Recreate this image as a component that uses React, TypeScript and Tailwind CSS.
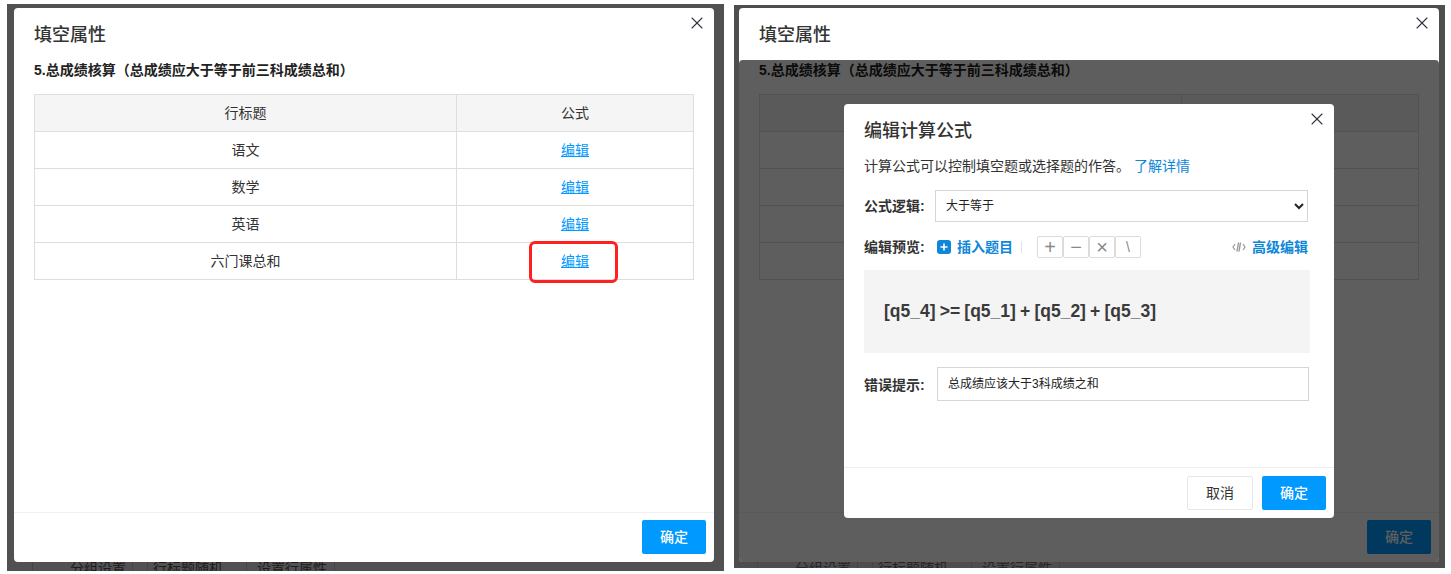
import { X } from "lucide-react";

const rows = ["语文", "数学", "英语", "六门课总和"];

function CloseButton() {
  return <X className="absolute top-[5px] right-[7px]" size={20} strokeWidth={1.3} color="#33333f" />;
}

function PrimaryButton() {
  return (
    <button className="w-16 h-[34px] rounded-[2px] bg-[#0099ff] text-white text-sm font-medium">确定</button>
  );
}

function BackStrip() {
  return (
    <div className="h-[9px] overflow-hidden flex pl-[18px] text-sm text-[#1c1c1c] leading-5">
      <div className="-mt-[4px] h-6 border-l border-[#444] pl-[37px] w-[101px] whitespace-nowrap border-r">分组设置</div>
      <div className="-mt-[4px] h-6 ml-[14px] border-l border-[#444] pl-[5px] w-[100px] whitespace-nowrap border-r">行标题随机</div>
      <div className="-mt-[4px] h-6 w-[88px] pl-[10px] whitespace-nowrap border-r border-[#444]">设置行属性</div>
    </div>
  );
}

function PropertyDialog({ dimmed }: { dimmed?: boolean }) {
  return (
    <div className="relative w-[700px] h-[554px] bg-white rounded flex flex-col">
      <div className="h-[52px] flex items-center px-5 pt-[2px] text-lg text-[#333] font-medium shrink-0">填空属性</div>
      <CloseButton />
      <div className="flex-1 px-5">
        <div className="text-sm font-bold text-[#222] leading-5">5.总成绩核算（总成绩应大于等于前三科成绩总和）</div>
        <table className="mt-[14px] w-[660px] table-fixed border-collapse text-sm text-[#333]">
          <colgroup>
            <col className="w-[422px]" />
            <col />
          </colgroup>
          <thead>
            <tr className="h-[37px] bg-[#f5f5f5]">
              <th className="border border-[#dedede] font-normal">行标题</th>
              <th className="border border-[#dedede] font-normal">公式</th>
            </tr>
          </thead>
          <tbody>
            {rows.map((r) => (
              <tr key={r} className="h-[37px]">
                <td className="border border-[#dedede] text-center">{r}</td>
                <td className="border border-[#dedede] text-center">
                  <a className="text-[#0099ff] underline">编辑</a>
                </td>
              </tr>
            ))}
          </tbody>
        </table>
      </div>
      <div className="h-[50px] shrink-0 border-t border-[#f0f0f0] flex justify-end items-start pt-[7px] pr-2">
        <PrimaryButton />
      </div>
      {!dimmed && (
        <div className="absolute left-[515px] top-[233px] w-[89px] h-[42px] border-[3px] border-[#ff2020] rounded-md" />
      )}
      {dimmed && (
        <div className="absolute inset-x-0 top-[52px] bottom-0 bg-black/[0.63] rounded">
          <FormulaDialog />
        </div>
      )}
    </div>
  );
}

function OpButton({ children }: { children: string }) {
  return (
    <div className="w-[26px] h-[22px] border border-[#dcdcdc] rounded-[2px] flex items-center justify-center text-[#888] text-xl leading-none">
      {children}
    </div>
  );
}

function FormulaDialog() {
  return (
    <div className="absolute left-[105px] top-[44px] w-[490px] h-[414px] bg-white rounded flex flex-col text-sm text-[#333]">
      <CloseButton />
      <div className="flex-1 px-5 flex flex-col">
        <div className="h-[54px] flex items-center text-lg font-medium shrink-0">编辑计算公式</div>
        <div className="leading-5 -mt-[2px]">
          计算公式可以控制填空题或选择题的作答。
          <a className="text-[#0f87d8] ml-1">了解详情</a>
        </div>
        <div className="flex items-center mt-[14px]">
          <span className="w-[71px] font-semibold shrink-0">公式逻辑:</span>
          <select className="w-[373px] h-8 border border-[#d6d6d6] bg-white text-xs pl-[6px] text-[#222]">
            <option>大于等于</option>
          </select>
        </div>
        <div className="flex items-center mt-[14px] h-[22px]">
          <span className="w-[73px] font-semibold shrink-0">编辑预览:</span>
          <svg width="14" height="14" viewBox="0 0 14 14" className="shrink-0">
            <rect width="14" height="14" rx="3" fill="#0f87d8" />
            <path d="M7 3.5v7M3.5 7h7" stroke="#fff" strokeWidth="1.6" />
          </svg>
          <a className="text-[#0f87d8] ml-[6px] font-semibold">插入题目</a>
          <span className="w-px h-3 bg-[#e4e4e4] ml-2 mr-[15px]" />
          <div className="flex">
            <OpButton>+</OpButton>
            <OpButton>−</OpButton>
            <OpButton>×</OpButton>
            <div className="w-[26px] h-[22px] border border-[#dcdcdc] rounded-[2px] flex items-center justify-center text-[#888] text-sm leading-none">
              \
            </div>
          </div>
          <div className="ml-auto flex items-center mr-[6px]">
            <svg width="14" height="12" viewBox="0 0 14 12" fill="none" stroke="#999" strokeWidth="1.2">
              <path d="M3 3L1 6l2 3" />
              <path d="M11 3l2 3-2 3" />
              <path d="M6 10.5L7.5 1.5M8 10.5L9.5 1.5" strokeWidth="1.4" transform="translate(-1 0)" />
            </svg>
            <a className="text-[#0f87d8] ml-[6px] font-semibold">高级编辑</a>
          </div>
        </div>
        <div className="mt-3 w-[446px] h-[83px] bg-[#f4f4f4] flex items-center pl-5 text-[17.5px] font-bold text-[#3a3a3a] [word-spacing:-0.7px] shrink-0">
          [q5_4] &gt;= [q5_1] + [q5_2] + [q5_3]
        </div>
        <div className="flex items-center mt-[14px]">
          <span className="w-[73px] font-semibold shrink-0 pt-[2px]">错误提示:</span>
          <div className="w-[372px] h-[34px] border border-[#d6d6d6] flex items-center pl-[10px] text-xs text-[#222]">
            总成绩应该大于3科成绩之和
          </div>
        </div>
      </div>
      <div className="h-[51px] shrink-0 border-t border-[#efefef] flex justify-end items-start pt-2 pr-2 gap-[9px]">
        <button className="w-[66px] h-[34px] border border-[#e6e6e6] rounded-[2px]">取消</button>
        <PrimaryButton />
      </div>
    </div>
  );
}

export default function App() {
  return (
    <div className="w-[1451px] h-[574px] bg-white flex items-start font-['Liberation_Sans','Noto_Sans_CJK_SC',sans-serif] overflow-hidden">
      <div className="ml-[7px] mt-1 w-[717px] h-[567px] bg-[#515151] pl-[7px] pt-1 overflow-hidden">
        <PropertyDialog />
        <BackStrip />
      </div>
      <div className="ml-[10px] mt-[5px] w-[711px] h-[563px] bg-[#4e4e4e] pl-[5px] pt-[3px] overflow-hidden">
        <PropertyDialog dimmed />
        <div className="opacity-80">
          <BackStrip />
        </div>
      </div>
    </div>
  );
}
